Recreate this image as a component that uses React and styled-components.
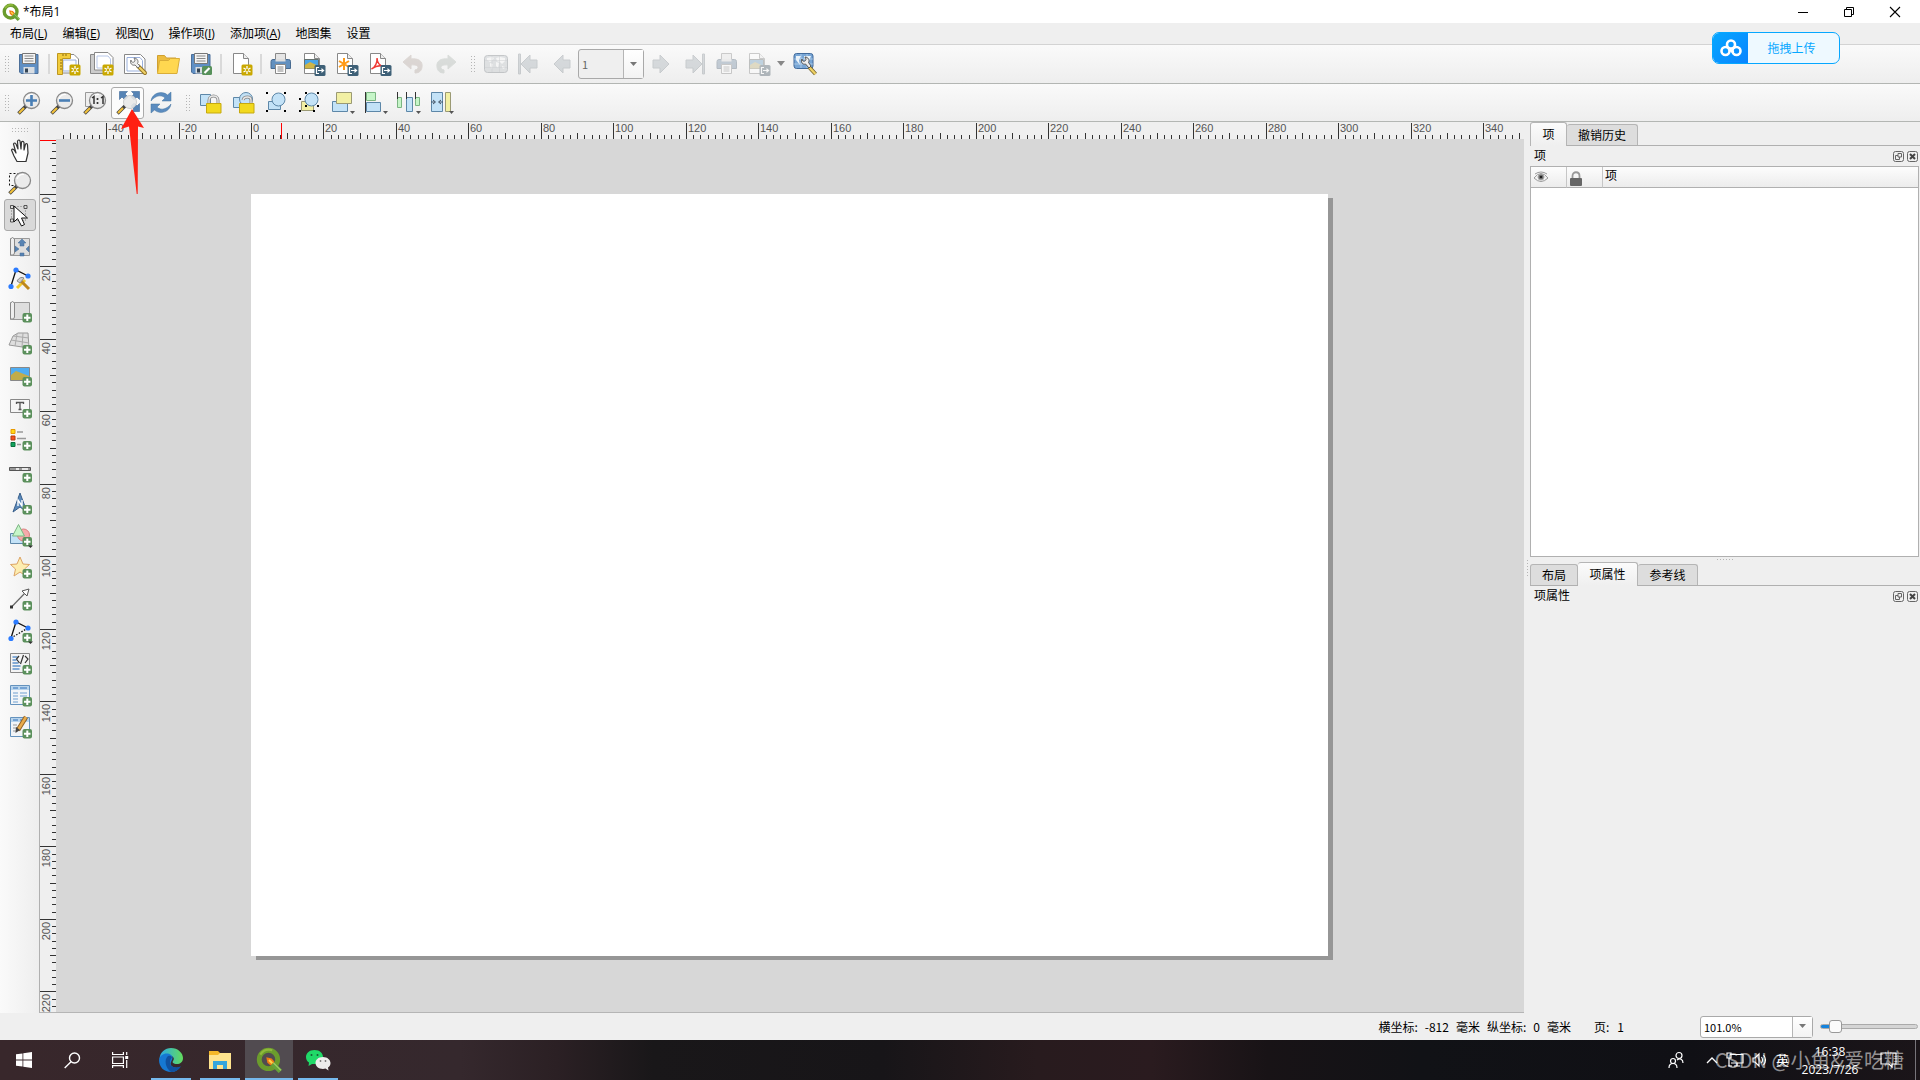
import styled, { createGlobalStyle, css } from 'styled-components'

const uiFont = `'Open Sans', 'Noto Sans CJK SC', sans-serif`
const songFont = `'Noto Sans CJK SC', sans-serif`

const App = () => {
  return (
    <Window>
      <GlobalStyle />
      <TitleBar>
        <QgisLogo size={18} />
        <Title>*布局1</Title>
        <WindowButton aria-label="最小化">
          <svg width="12" height="12"><path d="M1 6.5h10" stroke="#000" /></svg>
        </WindowButton>
        <WindowButton aria-label="还原">
          <svg width="12" height="12" fill="none" stroke="#000">
            <path d="M1.5 3.5h7v7h-7zM3.5 3.5v-2h7v7h-2" />
          </svg>
        </WindowButton>
        <WindowButton aria-label="关闭">
          <svg width="12" height="12"><path d="M1 1l10 10M11 1L1 11" stroke="#000" strokeWidth="1.1" /></svg>
        </WindowButton>
      </TitleBar>

      <MenuBar>
        {menus.map(([label, key]) => (
          <MenuButton key={label}>
            {label}
            {key && <>(<u>{key}</u>)</>}
          </MenuButton>
        ))}
      </MenuBar>

      <Toolbar>
        <Grip $first />
        <Tool name="保存工程" icon={<Floppy />} />
        <Separator />
        <Tool name="新建布局" icon={<NewLayout />} />
        <Tool name="复制布局" icon={<DuplicateLayout />} />
        <Tool name="布局管理器" icon={<LayoutManager />} />
        <Tool name="从模板添加" icon={<Folder />} />
        <Tool name="另存为模板" icon={<><Floppy /><PencilBadge /></>} />
        <Separator />
        <Tool name="添加页面" icon={<><Sheet /><StarBadge /></>} />
        <Separator />
        <Tool name="打印" icon={<Printer />} />
        <Tool name="导出为图像" icon={<ExportImage />} />
        <Tool name="导出为SVG" icon={<ExportSvg />} />
        <Tool name="导出为PDF" icon={<ExportPdf />} />
        <Tool name="撤销" disabled icon={<Undo color="#c0a798" />} />
        <Tool name="重做" disabled icon={<g transform="matrix(-1 0 0 1 24 0)"><Undo color="#aab9ae" /></g>} />
        <Grip />
        <Tool name="预览地图集" disabled icon={<AtlasMap />} />
        <Tool name="第一个要素" disabled icon={<><Arrow /><path d="M1.5 2v20h2V2z" {...navPaint} /></>} />
        <Tool name="上一个要素" disabled icon={<Arrow />} />
        <ComboBox $width={66} $height={30} $gray>
          <select aria-label="地图集页" defaultValue="1" disabled>
            <option>1</option>
          </select>
          <ComboArrow />
        </ComboBox>
        <Tool name="下一个要素" disabled icon={<g transform="matrix(-1 0 0 1 24 0)"><Arrow /></g>} />
        <Tool
          name="最后一个要素"
          disabled
          icon={<g transform="matrix(-1 0 0 1 24 0)"><Arrow /><path d="M1.5 2v20h2V2z" {...navPaint} /></g>}
        />
        <Tool name="打印地图集" disabled icon={<Printer />} />
        <WideTool aria-label="导出地图集" disabled>
          <Icon $dim viewBox="0 0 24 24"><ExportImage /></Icon>
          <svg width="10" height="6"><path d="M1 0h8L5 5z" fill="#888" /></svg>
        </WideTool>
        <Tool name="地图集设置" icon={<AtlasSettings />} />
      </Toolbar>

      <Toolbar>
        <Grip $first />
        <Tool name="放大" icon={<><Magnifier /><path d="M14.5 4v11M9 9.5h11" stroke="#4a7fb5" strokeWidth="2.6" /></>} />
        <Tool name="缩小" icon={<><Magnifier /><path d="M9 9.5h11" stroke="#4a7fb5" strokeWidth="2.6" /></>} />
        <Tool name="缩放到100%" icon={<ZoomActual />} />
        <Tool name="全图缩放" hot icon={<ZoomFull />} />
        <Tool name="刷新视图" icon={<Refresh />} />
        <Grip />
        <Tool name="锁定所选项" icon={<><path d="M1.5 3.5h10v11h-10z" {...bluePaint} /><Padlock /></>} />
        <Tool name="全部解锁" icon={<UnlockAll />} />
        <Tool name="编组" icon={<Group />} />
        <Tool name="取消编组" icon={<Ungroup />} />
        <Tool name="提升所选项" icon={<Raise />} />
        <Tool name="对齐所选项" icon={<AlignLeft />} />
        <Tool name="分布所选项" icon={<Distribute />} />
        <Tool name="调整大小" icon={<Resize />} />
      </Toolbar>

      <Workspace>
        <ToolBox>
          <ToolBoxGrip />
          {sideTools.map(([name, icon, selected]) => (
            <SideButton key={name} aria-label={name} $selected={selected}>
              <Icon viewBox="0 0 24 24">{icon}</Icon>
            </SideButton>
          ))}
        </ToolBox>

        <LayoutView>
          <RulerCorner />
          <HorizontalRuler />
          <VerticalRuler />
          <Canvas>
            <Paper />
          </Canvas>
        </LayoutView>

        <DockSplitter />

        <Docks>
          <Dock $grow={435}>
            <Tabs>
              <Tab $active $width={37}>项</Tab>
              <Tab $width={71}>撤销历史</Tab>
            </Tabs>
            <DockHeader title="项" />
            <ItemTree>
              <table>
                <thead>
                  <tr>
                    <NarrowHead aria-label="可见"><Eye /></NarrowHead>
                    <NarrowHead aria-label="锁定"><SmallLock /></NarrowHead>
                    <th>项</th>
                  </tr>
                </thead>
              </table>
            </ItemTree>
          </Dock>
          <HorizontalSplitter />
          <Dock $grow={451}>
            <Tabs>
              <Tab $width={48}>布局</Tab>
              <Tab $active $width={60}>项属性</Tab>
              <Tab $width={60}>参考线</Tab>
            </Tabs>
            <DockHeader title="项属性" />
          </Dock>
        </Docks>
      </Workspace>

      <StatusBar>
        <Coordinates>
          <span>横坐标:</span>
          <span>-812</span>
          <span>毫米</span>
          <span>纵坐标:</span>
          <span>0</span>
          <span>毫米</span>
        </Coordinates>
        <PageNumber>
          <span>页:</span>
          <span>1</span>
        </PageNumber>
        <ComboBox $width={113} $height={22}>
          <select aria-label="缩放比例" defaultValue="101.0%">
            <option>101.0%</option>
          </select>
          <ComboArrow />
        </ComboBox>
        <ZoomSlider type="range" aria-label="缩放" min="0" max="100" defaultValue="10" />
      </StatusBar>

      <TaskBar>
        <TaskButton aria-label="开始">
          <svg width="16" height="16" fill="#fff">
            <path d="M0 2.3l6.5-.9v6.1H0zM7.3 1.3L16 0v7.500H7.300zM0 8.400h6.500v6.200L0 13.700zM7.300 8.400H16V16l-8.700-1.300z" />
          </svg>
        </TaskButton>
        <TaskButton aria-label="搜索">
          <svg width="17" height="17" fill="none" stroke="#fff" strokeWidth="1.4">
            <circle cx="10.5" cy="6" r="5" /><path d="M7 9.8L.7 16" />
          </svg>
        </TaskButton>
        <TaskButton aria-label="任务视图">
          <svg width="17" height="16" fill="none" stroke="#fff" strokeWidth="1.2">
            <path d="M.6 0v2.5h10.800V0M.6 5h10.800v6.500H.6zM.6 16v-2.400h10.800V16M14.700 0v3M14.700 8v8" />
            <path d="M13.200 4h3v3h-3z" fill="#fff" stroke="none" />
          </svg>
        </TaskButton>
        <RunningApps>
          <AppButton aria-label="Microsoft Edge"><EdgeLogo /></AppButton>
          <AppButton aria-label="文件资源管理器"><ExplorerLogo /></AppButton>
          <AppButton aria-label="QGIS" $current><QgisLogo size={26} /></AppButton>
          <AppButton aria-label="微信"><WeChatLogo /></AppButton>
        </RunningApps>
        <Tray>
          <svg width="16" height="18" viewBox="0 0 16 18" fill="none" stroke="#fff" strokeWidth="1.2">
            <circle cx="11" cy="4.5" r="3" /><circle cx="5" cy="10" r="2.5" />
            <path d="M1 17c0-6 8-6 8 0M9 9c3-2 6-1 6 3" />
          </svg>
          <svg width="12" height="8" fill="none" stroke="#fff" strokeWidth="1.3"><path d="M1 7l5-5 5 5" /></svg>
          <svg width="18" height="16" fill="none" stroke="#fff" strokeWidth="1.2">
            <path d="M4 2.5h13v8.500H5M8 14h6M11 11v3M1 1h4v5H1zM3 6v8h3" />
          </svg>
          <svg width="16" height="16" fill="none" stroke="#fff" strokeWidth="1.2">
            <path d="M1 6h2l4-4v12l-4-4H1zM9.500 5q2 3 0 6M11.500 3q4 5 0 10" />
          </svg>
          <Ime>英</Ime>
        </Tray>
        <Clock>
          <span>16:38</span>
          <span>2023/7/26</span>
        </Clock>
        <Notice aria-label="通知">
          <svg width="17" height="17" fill="none" stroke="#fff" strokeWidth="1.2">
            <path d="M1 1h15v11h-4v3l-3-3H1z" />
          </svg>
        </Notice>
        <Watermark>CSDN @小鱼&amp;爱吃糖</Watermark>
      </TaskBar>

      <UploadButton>
        <UploadIcon>
          <svg width="22" height="18" fill="none" stroke="#fff" strokeWidth="2.6">
            <circle cx="11" cy="5.5" r="4" /><circle cx="5.5" cy="12" r="4" /><circle cx="16.5" cy="12" r="4" />
            <path d="M8.5 9.5l2.5 2 2.500 2" />
          </svg>
        </UploadIcon>
        <UploadLabel>拖拽上传</UploadLabel>
      </UploadButton>

      <Pointer width="24" height="85" viewBox="0 0 24 85">
        <path d="M11 0l12 19-6-1.500L16.700 85h-1L8 17.500 0 20z" fill="#ff2013" />
      </Pointer>
    </Window>
  )
}

export default App

const menus = [
  ['布局', 'L'],
  ['编辑', 'E'],
  ['视图', 'V'],
  ['操作项', 'I'],
  ['添加项', 'A'],
  ['地图集'],
  ['设置'],
]

const Tool = ({ name, icon, hot, disabled }) => (
  <ToolButton aria-label={name} $hot={hot} disabled={disabled}>
    <Icon $dim={disabled} viewBox="0 0 24 24">{icon}</Icon>
  </ToolButton>
)

const DockHeader = ({ title }) => (
  <DockTitle>
    <span>{title}</span>
    <DockButton aria-label="浮动">
      <svg width="11" height="11" fill="none" stroke="#666">
        <rect x=".5" y=".5" width="10" height="10" rx="2" />
        <path d="M5 2.5h3.500V6H5zM5 4.500H2.500v4h4V6" />
      </svg>
    </DockButton>
    <DockButton aria-label="关闭">
      <svg width="11" height="11" fill="none" stroke="#666">
        <rect x=".5" y=".5" width="10" height="10" rx="2" />
        <path d="M3 3l5 5M8 3L3 8" strokeWidth="2" stroke="#444" />
      </svg>
    </DockButton>
  </DockTitle>
)

const ComboArrow = () => (
  <ComboDrop>
    <svg width="9" height="5"><path d="M1 0h7L4.500 4z" fill="#777" /></svg>
  </ComboDrop>
)

/* rulers: a tick each 2 mm, a label each 20 mm */

const pxPerMm = 3.624

const ticks = (from, to, origin) => {
  const list = []
  for (let mm = from; mm <= to; mm += 2) {
    list.push({
      mm,
      at: Math.round(origin + mm * pxPerMm),
      major: mm % 20 === 0,
      length: mm % 20 === 0 ? 16 : mm % 10 === 0 ? 6 : 4,
    })
  }
  return list
}

const HorizontalRuler = () => (
  <Ruler>
    {ticks(-52, 350, 195).map(({ mm, at, major, length }) => (
      <g key={mm}>
        <rect x={at} y={17 - length} width="1" height={length} />
        {major && <text x={at + 2} y="10">{mm}</text>}
      </g>
    ))}
    <rect x="225" y="1" width="1" height="16" fill="#f00" />
  </Ruler>
)

const VerticalRuler = () => (
  <Ruler>
    {ticks(-14, 224, 55).map(({ mm, at, major, length }) => (
      <g key={mm}>
        <rect x={16 - length} y={at} width={length} height="1" />
        {major && (
          <text textAnchor="end" transform={`translate(10 ${at + 3}) rotate(-90)`}>{mm}</text>
        )}
      </g>
    ))}
    <rect x="0" y="1" width="16" height="1" fill="#f00" />
  </Ruler>
)

/* icons, all drawn on a 24 unit square */

const bluePaint = { fill: '#c3e2f7', stroke: '#5d87a8', strokeWidth: 1 }
const yellowPaint = { fill: '#f2f0a4', stroke: '#9b9a74', strokeWidth: 1 }
const greenPaint = { fill: '#c6f5c8', stroke: '#7cb583', strokeWidth: 1 }
const grayPaint = { fill: '#dedede', stroke: '#999', strokeWidth: 1 }
const navPaint = { fill: '#9fb1bd', stroke: '#82929e', strokeWidth: 1 }

const Floppy = () => (
  <>
    <path d="M2.5 2.5h18.500v19H4l-1.500-1.500z" fill="#5f8fc4" stroke="#4c6f99" />
    <path d="M5.5 1.5h13v10h-13z" fill="#f4f4f4" stroke="#777" />
    <path d="M7.5 4h9M7.5 6.500h9M7.5 9h9" stroke="#888" />
    <path d="M6.5 15h11v6.500h-11z" fill="#d8dde2" />
    <path d="M8 16.500h3v4H8z" fill="#345" />
  </>
)

const Sheet = ({ x = 0 }) => (
  <g transform={`translate(${x} 0)`}>
    <path d="M4.5 1.5h10l5 5v15h-15z" fill="#fff" stroke="#888" />
    <path d="M14.5 1.5v5h5" fill="#eee" stroke="#888" />
  </g>
)

const StarBadge = () => (
  <>
    <rect x="12.5" y="12.5" width="11" height="11" rx="1.5" fill="#c9a800" />
    <path d="M18 14v8M14.5 16l7 4M14.5 20l7-4" stroke="#fff" strokeWidth="1.3" />
    <circle cx="18" cy="18" r="1.2" fill="#c9a800" />
  </>
)

const PencilBadge = () => (
  <>
    <rect x="13" y="14" width="10" height="9" rx="1.5" fill="#56905a" />
    <path d="M15.5 21l5-5" stroke="#fff" strokeWidth="2.2" />
  </>
)

const ExportBadge = () => (
  <>
    <rect x="12.5" y="13" width="11" height="11" rx="1.5" fill="#3e6077" />
    <path d="M17 15.5h-2.500v6H17M16 18.500h4.500" fill="none" stroke="#fff" strokeWidth="1.2" />
    <path d="M19.5 16l3 2.500-3 2.500z" fill="#fff" />
  </>
)

const AddBadge = ({ menu }) => (
  <>
    <rect x="14.5" y="14" width="9.5" height="9.5" rx="2" fill="#5b905c" />
    <path d="M19.3 15.5v6.500M16 18.800h6.500" stroke="#fff" strokeWidth="2" />
    {menu && <path d="M20 22.500h5L22.500 25z" fill="#333" />}
  </>
)

const MenuArrow = () => <path d="M19 20h5l-2.500 3z" fill="#555" />

const NewLayout = () => (
  <>
    <path d="M3.5 2.5H17l4.500 4.500v14h-18z" fill="#fff" stroke="#888" />
    <path d="M6 8h13v11H6z" fill="#f9fbff" stroke="#9ab0dc" />
    <path d="M.5 1.5h13v5h-8v16h-5z" fill="#f2cc3c" stroke="#bd9620" />
    <path d="M3 8h2M3 11h2M3 14h2M3 17h2M6 2v2M9 2v2" stroke="#8b6a10" />
    <StarBadge />
  </>
)

const DuplicateLayout = () => (
  <>
    <path d="M.5 2.5h16v19H.5z" fill="#ccc" stroke="#888" />
    <path d="M4.5.5H18l5 5V18H4.5z" fill="#fff" stroke="#888" />
    <path d="M7 4h11l2.500 3v9H7z" fill="none" stroke="#b8c7e8" />
    <StarBadge />
  </>
)

const LayoutManager = () => (
  <>
    <path d="M1.5 2.5h16l4.500 4.500v14.500H1.5z" fill="#fff" stroke="#888" />
    <path d="M4 5.500h13l2.500 3V19H4z" fill="none" stroke="#9ab0dc" />
    <path d="M15 14l7 7" stroke="#957524" strokeWidth="4" strokeLinecap="round" />
    <path d="M15 14l7 7" stroke="#f0d268" strokeWidth="2" strokeLinecap="round" />
    <path d="M8 8c0 3 4 3 4 0l-1-2c3 0 5 3 3.500 5.500L17 14l-2 2-3-3c-3 1-5.500-2-4-5z" fill="#eee" stroke="#777" />
  </>
)

const Folder = () => (
  <>
    <path d="M1.5 20V3.500h7l2 2.500H20v14z" fill="#edbd3f" stroke="#d0a030" />
    <path d="M1.5 21.500l2-13h9l2-2h9l-2.500 15z" fill="#ffd750" stroke="#d9ad38" />
  </>
)

const Printer = () => (
  <>
    <path d="M6.5 1.5h10v8h-10z" fill="#e5e5e5" stroke="#888" />
    <path d="M2 9.500q0-2 2-2h15.500q2 0 2 2v7H2z" fill="#6290bf" stroke="#486b90" />
    <path d="M6.5 7h10v2.500h-10z" fill="#ddd" />
    <path d="M6.5 12.500h10v9h-10z" fill="#fff" stroke="#888" />
    <path d="M8.5 15h6M8.5 17h6M8.5 19h6" stroke="#888" />
  </>
)

const ExportImage = () => (
  <>
    <Sheet x={-2} />
    <path d="M2.5 7.5h14v9h-14z" fill="#4aa5e8" stroke="#66726f" />
    <path d="M3 13l5-3 8.500 4v2.500H3z" fill="#cfb546" />
    <ExportBadge />
  </>
)

const ExportSvg = () => (
  <>
    <Sheet x={-2} />
    <path d="M9 6v12M4 9l10 6M4 15l10-6" stroke="#ff9a17" strokeWidth="2" />
    <ExportBadge />
  </>
)

const ExportPdf = () => (
  <>
    <Sheet x={-2} />
    <path d="M3.5 17c4-2 6-7 5.500-11 0 5 3 8 6.500 8-4-1-8 0-12 3z" fill="none" stroke="#ef3b36" strokeWidth="1.5" />
    <ExportBadge />
  </>
)

const Undo = ({ color }) => (
  <path
    d="M2 10l8-7v4c7-1 12 2 11 8-.5 4-3 6-7 6v-3c5-1 4-6-4-5v4z"
    fill={color}
    stroke={color}
  />
)

const Arrow = () => <path d="M4 12l9-9v5h7v8h-7v5z" {...navPaint} />

const AtlasMap = () => (
  <>
    <rect x=".5" y="3.5" width="23" height="17" rx="3" fill="#b9c4cc" stroke="#76838d" />
    <path d="M3 6l5-1 2 1-2 3-2 1-3-2zM6 11l3 1-1 5-2-3zM12 6l4-1 5 1v3l-3 3-2-2-3-1zM12 10l3 1-1 5-2-2zM18 14l3 1-1 2-2-1z" fill="#f6f6f6" />
    <path d="M1 8.500h22M1 15.500h22M8 4v16M15.500 4v16" stroke="#8f9ba4" strokeWidth=".5" />
  </>
)

const AtlasSettings = () => (
  <>
    <rect x="1" y="1.5" width="19" height="15" rx="2.5" fill="#78a6d6" stroke="#426b9c" />
    <path d="M3 4h5L6 8l1 5-4-5zM11 4h7l-2 5h-4z" fill="#ecf4fa" />
    <path d="M1 7h19M1 12h19M8 2v14M14 2v14" stroke="#dbe8f4" strokeWidth=".5" />
    <path d="M16 15l6.500 7" stroke="#74622c" strokeWidth="4" />
    <path d="M16 15l6.500 7" stroke="#eed164" strokeWidth="2.4" />
    <path d="M9 7c0 3 4 3 4 0l-1-2c3 0 5 3 3.500 5.500L18 14l-2 2-3.500-4c-3 1-5-2-3.500-5z" fill="#eee" stroke="#555" />
  </>
)

const Magnifier = () => (
  <>
    <path d="M9 15L1.500 22.500" stroke="#444" strokeWidth="3.6" />
    <path d="M7 17L2 22" stroke="#f2c13a" strokeWidth="2.2" />
    <circle cx="14.5" cy="9.5" r="8" fill="#ebebeb" stroke="#888" strokeWidth="1.3" />
    <path d="M9 8q2-5 7-4.500" fill="none" stroke="#fff" strokeWidth="1.2" />
  </>
)

const ZoomActual = () => (
  <>
    <path d="M2.5 1.5h8v14h-8z" fill="#eee" stroke="#999" />
    <Magnifier />
    <path d="M9 7l2-1.500V13M18 7l2-1.500V13" fill="none" stroke="#333" strokeWidth="1.5" />
    <path d="M14.500 7v2M14.500 11v2" stroke="#333" strokeWidth="1.7" />
  </>
)

const ZoomFull = () => (
  <>
    <g fill="#5583b5" stroke="#3d6797" strokeWidth=".6">
      <path d="M3.5.5h8L9 3l3 3-3 3-3-3-2.500 2.500zM23.500.5h-8L18 3l-3 3 3 3 3-3 2.500 2.500z" />
      <path d="M23.500 20.500h-8L18 18l-3-3 3-3 3 3 2.500-2.500z" />
    </g>
    <path d="M9 15L1.500 22.500" stroke="#444" strokeWidth="3.4" />
    <path d="M7 17L2 22" stroke="#f2c13a" strokeWidth="2.2" />
    <circle cx="14" cy="11" r="6.5" fill="#e8e8e8" fillOpacity=".9" stroke="#ccc" />
  </>
)

const Refresh = () => (
  <g fill="#5b8cc0" stroke="#46749f" strokeWidth=".5">
    <path d="M2 10C3 2 13-1 18.500 4L22 1v9h-9l3-3C12 3 6 5 2 10z" />
    <path d="M22 13C21 21 11 24 5.500 19L2 22v-9h9l-3 3c4 4 10 2 14-3z" />
  </g>
)

const Padlock = () => (
  <>
    <path d="M10 13V9.500c0-6 9-6 9 0V13" fill="none" stroke="#888" strokeWidth="3" />
    <path d="M10 13V9.500c0-6 9-6 9 0V13" fill="none" stroke="#e8e8e8" strokeWidth="1.3" />
    <path d="M7.5 12.500h14.500v9.500H7.5z" fill="#f2d91e" stroke="#c6a90e" />
  </>
)

const UnlockAll = () => (
  <>
    <path d="M1.5 6.5h9v10h-9z" {...bluePaint} />
    <circle cx="14" cy="8" r="6.5" {...bluePaint} />
    <path d="M11 9c1-4 8-4 8 0v4" fill="none" stroke="#888" strokeWidth="3" />
    <path d="M11 9c1-4 8-4 8 0v4" fill="none" stroke="#e8e8e8" strokeWidth="1.3" />
    <path d="M7.5 12.500h14.500v9.500H7.5z" fill="#f2d91e" stroke="#c6a90e" />
  </>
)

const Handles = ({ points }) => points.map(([x, y]) => (
  <rect key={`${x}-${y}`} x={x} y={y} width="2" height="2" fill="#000" />
))

const Group = () => (
  <>
    <path d="M3.5 10.500h12v8h-12z" {...bluePaint} />
    <circle cx="13.5" cy="8.5" r="6.5" {...bluePaint} />
    <Handles points={[[1, 1], [19, 1], [1, 19], [19, 19]]} />
  </>
)

const Ungroup = () => (
  <>
    <path d="M3.5 10.500h12v9h-12z" {...yellowPaint} />
    <circle cx="13.5" cy="8.5" r="6.5" {...bluePaint} />
    <Handles points={[[1, 7], [7, 1], [19, 1], [1, 19], [15, 19], [19, 14], [7, 14]]} />
  </>
)

const Raise = () => (
  <>
    <path d="M1.5 10.500h15v10h-15z" {...bluePaint} />
    <path d="M5.5 1.5h15v11h-15z" {...yellowPaint} />
    <MenuArrow />
  </>
)

const AlignLeft = () => (
  <>
    <path d="M2.5 1.5h9v8h-9z" {...greenPaint} />
    <path d="M2.5 11.500h14v9h-14z" {...bluePaint} />
    <path d="M1.5 1v21" stroke="#333" />
    <MenuArrow />
  </>
)

const Distribute = () => (
  <>
    <path d="M.5 6.5h4v10h-4zM18.500 6.500h4v8h-4z" {...greenPaint} />
    <path d="M9.5 6.500h6v14h-6z" {...bluePaint} />
    <path d="M.5 1v7M9.500 1v7M18.500 1v7" stroke="#333" />
    <MenuArrow />
  </>
)

const Resize = () => (
  <>
    <path d="M1.5 1.5h11v19h-11z" {...bluePaint} />
    <path d="M15.5 1.5h5v19h-5z" {...yellowPaint} />
    <path d="M1 11h4M3 9l2.500 2L3 13M13 11H9M11 9l-2.500 2 2.500 2" fill="none" stroke="#456" />
    <MenuArrow />
  </>
)

const Hand = () => (
  <path
    d="M9 22.500L6 17l-2.500-6q1-2 3 .5L8 14 5.500 5q1-2 2.500 0L10 10 9.500 2q1.500-2 2.500 0l1 8 .5-7q1.500-1.500 2.500.5L16 11l1.500-6q2-1 2 1L20 14l-2 8.500z"
    fill="#fff"
    stroke="#333"
    strokeWidth="1.2"
    strokeLinejoin="round"
  />
)

const Roll = () => (
  <>
    <path d="M2.5 3.500h19v17h-19z" {...grayPaint} />
    <path d="M2.5 4q2-3 4 0v14q0 3-4 2z" fill="#eee" stroke="#888" />
  </>
)

const Nodes = ({ dashed }) => (
  <>
    <path d="M3 19L8 3l12 6" fill="none" stroke="#111" strokeWidth="1.3" />
    {dashed && <path d="M3 19L20 9" stroke="#111" strokeWidth="1.3" strokeDasharray="1.5 1.5" />}
    <g fill="#2b7bff"><circle cx="8" cy="3" r="2.6" /><circle cx="3" cy="19.5" r="2.6" /><circle cx="20" cy="9" r="2.6" /></g>
  </>
)

const TableSheet = () => (
  <>
    <path d="M2.5 2.5h19v19h-19z" fill="#f2f5f8" stroke="#6492bd" />
    <path d="M3 3h18v4H3z" fill="#b8d4ec" />
    <path d="M5 5h5M12 5h7" stroke="#5f93cc" strokeWidth="1.5" />
  </>
)

const sideTools = [
  ['平移布局', <Hand />],
  ['缩放', (
    <>
      <path d="M1.5 2.500h12v12h-12z" fill="none" stroke="#111" strokeDasharray="2 2" />
      <Magnifier />
    </>
  )],
  ['选择/移动项', (
    <>
      <path d="M3.5 3.500h14v14h-14z" fill="none" stroke="#777" strokeDasharray="1 2" />
      <path d="M2.5 2.500h3v3h-3zM16 2.500h3v3h-3zM2.500 16h3v3h-3z" fill="#ddd" stroke="#333" strokeWidth=".8" />
      <path d="M6 3v16l3.500-3.500L13.500 23l3-1.500-3-6.500h6z" fill="#fff" stroke="#111" />
    </>
  ), true],
  ['移动项内容', (
    <>
      <Roll />
      <path d="M14 4l4 4h-2v3h-4V8h-2zM7 11l4 3-4 3zM21 11l-3 3 3 3zM12 18h4v3h-4z" fill="#5783b3" stroke="#446a94" strokeWidth=".5" />
    </>
  )],
  ['编辑节点项', (
    <>
      <Nodes />
      <path d="M9 21l8-8" stroke="#f0c82a" strokeWidth="3" />
      <path d="M13 14l8 8" stroke="#bd861c" strokeWidth="3" />
      <path d="M9 14q3-5 7-3l-4 5z" fill="#ccc" stroke="#888" />
    </>
  )],
  ['添加地图', <><Roll /><AddBadge /></>],
  ['添加3D地图', (
    <>
      <path d="M1 14L5 5l5-3h10l1 15z" {...grayPaint} />
      <path d="M3 9l18 3M5 5l16 2M9 3L7 15M15 2l-1 14" fill="none" stroke="#aaa" />
      <AddBadge />
    </>
  )],
  ['添加图片', (
    <>
      <path d="M2.5 4.500h19v13h-19z" fill="#4fadf2" stroke="#888" />
      <path d="M3 12l5-4 13 5v4H3z" fill="#c2ac4a" />
      <AddBadge />
    </>
  )],
  ['添加标注', (
    <>
      <path d="M2.5 4.500h19v13h-19z" fill="#f6f6f6" stroke="#888" />
      <path d="M8.5 9V7.500h7V9M12 7.500v7M10.500 14.500h3" fill="none" stroke="#555" strokeWidth="1.3" />
      <AddBadge />
    </>
  )],
  ['添加图例', (
    <>
      <path d="M3 2.500h4v4H3z" fill="#ffd815" stroke="#e89a00" />
      <path d="M3 9h4v4H3z" fill="#f4511e" stroke="#b33a10" />
      <path d="M3 15.500h4v4H3z" fill="#10a35c" stroke="#0a703e" />
      <path d="M9 5h6M9 11.500h9M9 17.500h4" stroke="#999" strokeWidth="1.5" />
      <AddBadge />
    </>
  )],
  ['添加比例尺', (
    <>
      <path d="M1.5 8.500h21v3h-21z" fill="#999" stroke="#555" />
      <path d="M8 10h3M14 10h6" stroke="#fff" strokeWidth="1.5" />
      <AddBadge />
    </>
  )],
  ['添加指北针', (
    <>
      <path d="M12 2l7 19-7-5-7 5z" fill="#5b8abb" stroke="#3a5f8a" />
      <path d="M10 15V9l4 6V9" fill="none" stroke="#fff" strokeWidth="1.4" />
      <AddBadge />
    </>
  )],
  ['添加形状', (
    <>
      <path d="M2.5 10.500h13v10h-13z" {...bluePaint} />
      <circle cx="15.5" cy="12" r="6" fill="#f6aaaa" stroke="#db7d7d" />
      <path d="M10.5 1.500l6 11.500h-12z" {...greenPaint} />
      <AddBadge menu />
    </>
  )],
  ['添加标记', (
    <>
      <path d="M12 2l3 7 6.500.5-5 4.500 1.500 7-6-4-6 4 1.500-7-5-4.500L9 9z" fill="#fdedb0" stroke="#dca465" />
      <AddBadge />
    </>
  )],
  ['添加箭头', (
    <>
      <path d="M3.5 20L18 5" stroke="#666" strokeWidth="1.2" />
      <path d="M2 18.500h3v3H2z" fill="#333" />
      <path d="M21 2l-2 7-2.500-2.500L14 4z" fill="#fff" stroke="#555" />
      <AddBadge />
    </>
  )],
  ['添加节点项', <><Nodes dashed /><AddBadge menu /></>],
  ['添加HTML', (
    <>
      <path d="M2.5 2.500h19v19h-19z" fill="#f4f4f4" stroke="#888" />
      <path d="M4.5 6h5M4.5 9h4M4.5 12h6M4.5 15h8M4.5 18h7" stroke="#5f93cc" strokeWidth="1.6" />
      <path d="M11 5L8.500 8l3 4M17 5l3 3-3 4M15.500 4l-3 9" fill="none" stroke="#333" strokeWidth="1.2" />
      <AddBadge />
    </>
  )],
  ['添加固定表格', (
    <>
      <TableSheet />
      <path d="M5 10h5M12 10h7M5 13h5M12 13h7M5 16h5M5 19h5" stroke="#6f9fd0" strokeWidth="1.2" />
      <AddBadge />
    </>
  )],
  ['添加属性表格', (
    <>
      <TableSheet />
      <path d="M5 10h4M5 13h4M5 16h3" stroke="#999" />
      <path d="M18 2L10 15" stroke="#8f6124" strokeWidth="4.5" />
      <path d="M18 2L10 15" stroke="#e8ab4c" strokeWidth="2.6" />
      <path d="M8 12l4 3-4.500 3z" fill="#444" />
      <AddBadge />
    </>
  )],
]

const Eye = () => (
  <svg width="16" height="12" fill="none" stroke="#999">
    <path d="M1 7q7-9 14 0-7 7-14 0zM2 3q6-4 12 0" />
    <circle cx="8" cy="6" r="3" fill="#777" stroke="#aaa" />
    <circle cx="8" cy="6" r="1.3" fill="#222" stroke="none" />
  </svg>
)

const SmallLock = () => (
  <svg width="14" height="16" fill="none">
    <path d="M3.5 8V5c0-5 7-5 7 0v3" stroke="#999" strokeWidth="1.8" />
    <rect x="1" y="7" width="12" height="8" rx="1" fill="#666" />
  </svg>
)

const QgisLogo = ({ size }) => (
  <svg width={size} height={size} viewBox="0 0 24 24" fill="none">
    <circle cx="11.5" cy="11.5" r="8.5" stroke="#6b9c2d" strokeWidth="4.5" />
    <path d="M4 7q4-6 11-4" stroke="#8fb93a" strokeWidth="2" />
    <path d="M14 14l8.500 8.500" stroke="#66a23a" strokeWidth="4.4" />
    <path d="M15 13.500l8 8" stroke="#a5cf6a" />
    <path d="M9.5 9.500l5 1 2.500 3-3.500 3.500-3-2.500z" fill="#ee7913" />
    <path d="M12 12l3 3" stroke="#fbd34c" strokeWidth="2" />
  </svg>
)

const EdgeLogo = () => (
  <svg width="24" height="24" viewBox="0 0 24 24">
    <defs>
      <linearGradient id="edgeTop"><stop stopColor="#2aa9e8" /><stop offset="1" stopColor="#63dc5c" /></linearGradient>
    </defs>
    <path d="M.5 11C1 4 6 0 12 0c7 0 12 5 12 10 0 4-3 6-6 6-4 0-5-2-4-3 2-3 0-5-3-5-5 0-8 2-10.500 3z" fill="url(#edgeTop)" />
    <path d="M0 12c1-6 8-8 12-5 3 2 1 5 0 7-2 4 4 7 9 5-2 3-5 5-9 5-7 0-12-5-12-12z" fill="#1678d2" />
    <path d="M9 8c-4 3-3 12 3 16 4 0 8-2 10-6-5 3-12 1-11-4 0-3 2-4 2-5q-2-2-4-1z" fill="#10519f" />
  </svg>
)

const ExplorerLogo = () => (
  <svg width="22" height="18" viewBox="0 0 22 18">
    <path d="M0 0h9l2 2h11v16H0z" fill="#f5b829" />
    <path d="M0 4h9l2-2h11v16H0z" fill="#ffe48e" />
    <path d="M4 18v-8h14v8h-4v-4H8v4z" fill="#35a6dd" />
  </svg>
)

const WeChatLogo = () => (
  <svg width="26" height="22" viewBox="0 0 26 22">
    <path d="M9.5 1C4 1 1 4.500 1 8c0 3 1.500 4.500 3 5.500L3.500 17 7 15h3c5 0 8-3.500 8-7s-3-7-8.500-7z" fill="#20d968" />
    <path d="M18 8c-5 0-7.500 3-7.500 6s3 6 7.500 6l2.500-.5 3 2-.5-3c1.500-1 2.500-2.500 2.500-4.500 0-3-3-6-7.500-6z" fill="#ececec" />
    <g fill="#185b35"><circle cx="6.5" cy="6" r="1" /><circle cx="12.5" cy="6" r="1" /></g>
    <g fill="#777"><circle cx="15.5" cy="12" r=".9" /><circle cx="20.5" cy="12" r=".9" /></g>
  </svg>
)

const GlobalStyle = createGlobalStyle`
  * {
    box-sizing: border-box;
  }
  body {
    margin: 0;
    overflow: hidden;
  }
  button {
    padding: 0;
    border: 0;
    background: none;
    color: inherit;
    font: inherit;
  }
  svg {
    flex: none;
  }
`

const Window = styled.div`
  position: relative;
  height: 100vh;
  display: flex;
  flex-direction: column;
  background-color: #efefef;
  color: #000;
  font-family: ${uiFont};
  font-size: 12px;
  line-height: 16px;
`

const TitleBar = styled.header`
  flex: none;
  height: 23px;
  display: flex;
  align-items: center;
  padding: 0 2px;
  background-color: #fff;
`

const Title = styled.div`
  flex: 1;
  padding-left: 3px;
`

const WindowButton = styled.button`
  width: 46px;
  height: 21px;
  display: grid;
  place-items: center;
`

const MenuBar = styled.nav`
  flex: none;
  height: 22px;
  display: flex;
  align-items: center;
  gap: 15px;
  padding-left: 10px;
  border-bottom: 1px solid #d3d3d3;
`

const MenuButton = styled.button`
  white-space: nowrap;
`

const Toolbar = styled.div`
  flex: none;
  height: 39px;
  display: flex;
  align-items: center;
  border-bottom: 1px solid #b3b6b3;
  background: linear-gradient(#fafafa, #eeeeee);

  & + & {
    height: 38px;
  }
`

const dots = css`
  background-image: radial-gradient(circle, #b5b5b5 35%, transparent 45%);
  background-size: 3px 3px;
`

const Grip = styled.div`
  width: ${(props) => (props.$first ? 12 : 17)}px;
  height: 18px;
  padding-left: ${(props) => (props.$first ? 4 : 8)}px;

  &::before {
    content: '';
    display: block;
    width: 6px;
    height: 18px;
    ${dots}
  }
`

const Separator = styled.div`
  width: 7px;
  height: 20px;
  display: flex;
  justify-content: center;

  &::before {
    content: '';
    width: 2px;
    background-color: #d9d9d9;
  }
`

const ToolButton = styled.button`
  width: 33px;
  height: 32px;
  display: grid;
  place-items: center;
  border: 1px solid ${(props) => (props.$hot ? '#ababab' : 'transparent')};
  border-radius: 3px;
  background-color: ${(props) => (props.$hot ? '#fcfcfc' : 'transparent')};
`

const WideTool = styled.button`
  width: 45px;
  height: 32px;
  display: flex;
  align-items: center;
  gap: 5px;
  padding-left: 4px;
`

const Icon = styled.svg`
  width: 24px;
  height: 24px;
  overflow: visible;
  ${(props) => props.$dim && 'opacity: 0.4; filter: saturate(0.5);'}
`

const ComboBox = styled.div`
  width: ${(props) => props.$width}px;
  height: ${(props) => props.$height}px;
  display: grid;
  grid-template-columns: 1fr 20px;
  border: 1px solid #a9a9a9;
  border-radius: 3px;
  background-color: ${(props) => (props.$gray ? '#efefef' : '#fff')};

  select {
    grid-area: 1 / 1 / 2 / 3;
    min-width: 0;
    padding: 0 3px;
    border: 0;
    background: none;
    color: ${(props) => (props.$gray ? '#666' : '#000')};
    opacity: 1;
    font-family: ${songFont};
    font-size: 11px;
    appearance: none;
  }
`

const ComboDrop = styled.div`
  grid-area: 1 / 2;
  display: grid;
  place-items: center;
  border-left: 1px solid #b5b5b5;
  background: linear-gradient(#fff, #f3f3f3);
  pointer-events: none;
`

const Workspace = styled.main`
  flex: 1;
  min-height: 0;
  display: flex;
`

const ToolBox = styled.div`
  flex: none;
  width: 40px;
  display: flex;
  flex-direction: column;
  align-items: center;
  padding-left: 1px;
  border-right: 1px solid #b0b0b0;
  background: linear-gradient(90deg, #fafafa, #eeeeee);
`

const ToolBoxGrip = styled.div`
  width: 18px;
  height: 6px;
  margin: 5px 0 2px;
  ${dots}
`

const SideButton = styled.button`
  flex: none;
  width: 32px;
  height: 32px;
  display: grid;
  place-items: center;
  border: 1px solid ${(props) => (props.$selected ? '#aaa' : 'transparent')};
  border-radius: 3px;
  background-color: ${(props) => (props.$selected ? '#d9d9d9' : 'transparent')};
`

const LayoutView = styled.section`
  flex: 1;
  min-width: 0;
  display: grid;
  grid-template-columns: 16px minmax(0, 1fr);
  grid-template-rows: 17px minmax(0, 1fr);
  border-bottom: 1px solid #b5b5b5;
`

const RulerCorner = styled.div`
  background-color: #efefef;
`

const Ruler = styled.svg`
  display: block;
  width: 100%;
  height: 100%;
  background-color: #efefef;
  fill: #333;
  shape-rendering: crispEdges;

  text {
    fill: #555;
    font-family: 'Liberation Sans', sans-serif;
    font-size: 11px;
  }
`

const Canvas = styled.div`
  overflow: hidden;
  padding: 55px 0 0 195px;
  background-color: #d7d7d7;
`

const Paper = styled.div`
  width: 1077px;
  aspect-ratio: 1077 / 762;
  background-color: #fff;
  box-shadow: 5px 4px 0 #969696;
`

const DockSplitter = styled.div`
  flex: none;
  width: 6px;
  display: flex;
  align-items: center;

  &::before {
    content: '';
    width: 3px;
    height: 18px;
    margin: 0 2px;
    ${dots}
  }
`

const Docks = styled.aside`
  flex: none;
  width: 390px;
  display: flex;
  flex-direction: column;
`

const Dock = styled.section`
  flex: ${(props) => props.$grow} 1 0;
  display: flex;
  flex-direction: column;
`

const Tabs = styled.div`
  flex: none;
  height: 24px;
  display: flex;
  align-items: flex-end;
  border-bottom: 1px solid #b0b0b0;
`

const Tab = styled.button`
  width: ${(props) => props.$width}px;
  height: 21px;
  padding-top: 2px;
  border: 1px solid #b5b5b5;
  border-left-width: 0;
  border-bottom: 0;
  border-radius: 3px 3px 0 0;
  background-color: #dddddd;

  &:first-child {
    border-left-width: 1px;
  }

  ${(props) => props.$active && css`
    height: 24px;
    margin-bottom: -1px;
    padding-top: 0;
    background: linear-gradient(#fbfbfb, #efefef);
  `}
`

const DockTitle = styled.div`
  flex: none;
  height: 20px;
  display: flex;
  align-items: center;
  gap: 3px;
  padding: 0 2px 0 4px;

  span {
    flex: 1;
  }
`

const DockButton = styled.button`
  width: 11px;
  height: 11px;
  display: grid;
`

const ItemTree = styled.div`
  flex: 1;
  margin-right: 1px;
  border: 1px solid #b0b0b0;
  background-color: #fff;

  table {
    width: 100%;
    border-spacing: 0;
    table-layout: fixed;
  }

  th {
    height: 21px;
    padding: 1px 2px 0;
    border-bottom: 1px solid #b0b0b0;
    background: linear-gradient(#fdfdfd, #ececec);
    font-weight: 400;
    line-height: 16px;
    text-align: left;
    vertical-align: top;
  }
`

const NarrowHead = styled.th`
  width: 36px;
  border-right: 1px solid #c6c6c6;

  svg {
    display: block;
    height: 19px;
    padding-top: 3px;
    overflow: visible;
  }
`

const HorizontalSplitter = styled.div`
  flex: none;
  height: 5px;
  display: flex;
  justify-content: center;

  &::before {
    content: '';
    width: 18px;
    height: 3px;
    margin-top: 1px;
    ${dots}
  }
`

const StatusBar = styled.footer`
  flex: none;
  height: 27px;
  display: flex;
  align-items: center;
  justify-content: flex-end;
  padding-right: 2px;
  font-family: ${songFont};
`

const Coordinates = styled.div`
  display: flex;
  gap: 7px;
`

const PageNumber = styled.div`
  width: 106px;
  margin-left: 23px;
  display: flex;
  gap: 8px;
`

const ZoomSlider = styled.input`
  width: 98px;
  height: 14px;
  margin: 0 0 0 7px;
  background: none;
  appearance: none;

  &::-webkit-slider-runnable-track {
    height: 5px;
    border: 1px solid #aaa;
    border-radius: 3px;
    background: linear-gradient(90deg, #1583dd 12px, #d5d5d5 12px);
  }

  &::-webkit-slider-thumb {
    width: 13px;
    height: 13px;
    margin-top: -5px;
    border: 1px solid #999;
    border-radius: 3px;
    background: #fcfcfc;
    appearance: none;
  }
`

const TaskBar = styled.footer`
  position: relative;
  flex: none;
  height: 40px;
  display: flex;
  background: linear-gradient(
    90deg,
    #38272b 0%,
    #35282d 24%,
    #2b2024 29%,
    #191719 34%,
    #171518 46%,
    #281b1e 54%,
    #2a1b1f 60%,
    #181316 66%,
    #111216 74%,
    #101015 88%,
    #1b1519 100%
  );
  color: #fff;
`

const TaskButton = styled.button`
  width: 48px;
  height: 40px;
  display: grid;
  place-items: center;
`

const RunningApps = styled.div`
  flex: 1;
  display: flex;
  gap: 1px;
  padding-left: 3px;
`

const AppButton = styled.button`
  width: 48px;
  height: 40px;
  display: grid;
  place-items: center;
  background: linear-gradient(#76b9ed, #76b9ed) bottom / ${(props) => (props.$current ? 48 : 40)}px 2px no-repeat;
  background-color: ${(props) => (props.$current ? '#514b50' : 'transparent')};
`

const Tray = styled.div`
  display: flex;
  align-items: center;
  gap: 8px;
  padding-right: 10px;

  svg:first-child {
    margin-right: 14px;
  }
`

const Ime = styled.span`
  font-size: 13px;
  line-height: 20px;
`

const Clock = styled.time`
  width: 62px;
  display: flex;
  flex-direction: column;
  align-items: center;
  padding-top: 3px;
  line-height: 18px;
`

const Notice = styled.button`
  width: 55px;
  height: 40px;
  margin-right: 4px;
  display: grid;
  place-items: center;
  border-right: 1px solid #77747a;
`

const Watermark = styled.div`
  position: absolute;
  right: 16px;
  top: 6px;
  color: rgba(255, 255, 255, 0.55);
  font-family: ${songFont};
  font-size: 20px;
  line-height: 28px;
  white-space: nowrap;
`

const UploadButton = styled.button`
  position: absolute;
  top: 32px;
  right: 80px;
  width: 128px;
  height: 32px;
  display: flex;
  overflow: hidden;
  border: 1px solid #06a7ff;
  border-radius: 7px;
  background-color: #eef9ff;
  color: #06a7ff;
`

const UploadIcon = styled.span`
  width: 35px;
  height: 30px;
  display: grid;
  place-items: center;
  background: linear-gradient(135deg, #06a7ff, #0a84ff);
`

const UploadLabel = styled.span`
  flex: 1;
  padding-right: 4px;
  line-height: 32px;
`

const Pointer = styled.svg`
  position: absolute;
  top: 109px;
  left: 121px;
`
